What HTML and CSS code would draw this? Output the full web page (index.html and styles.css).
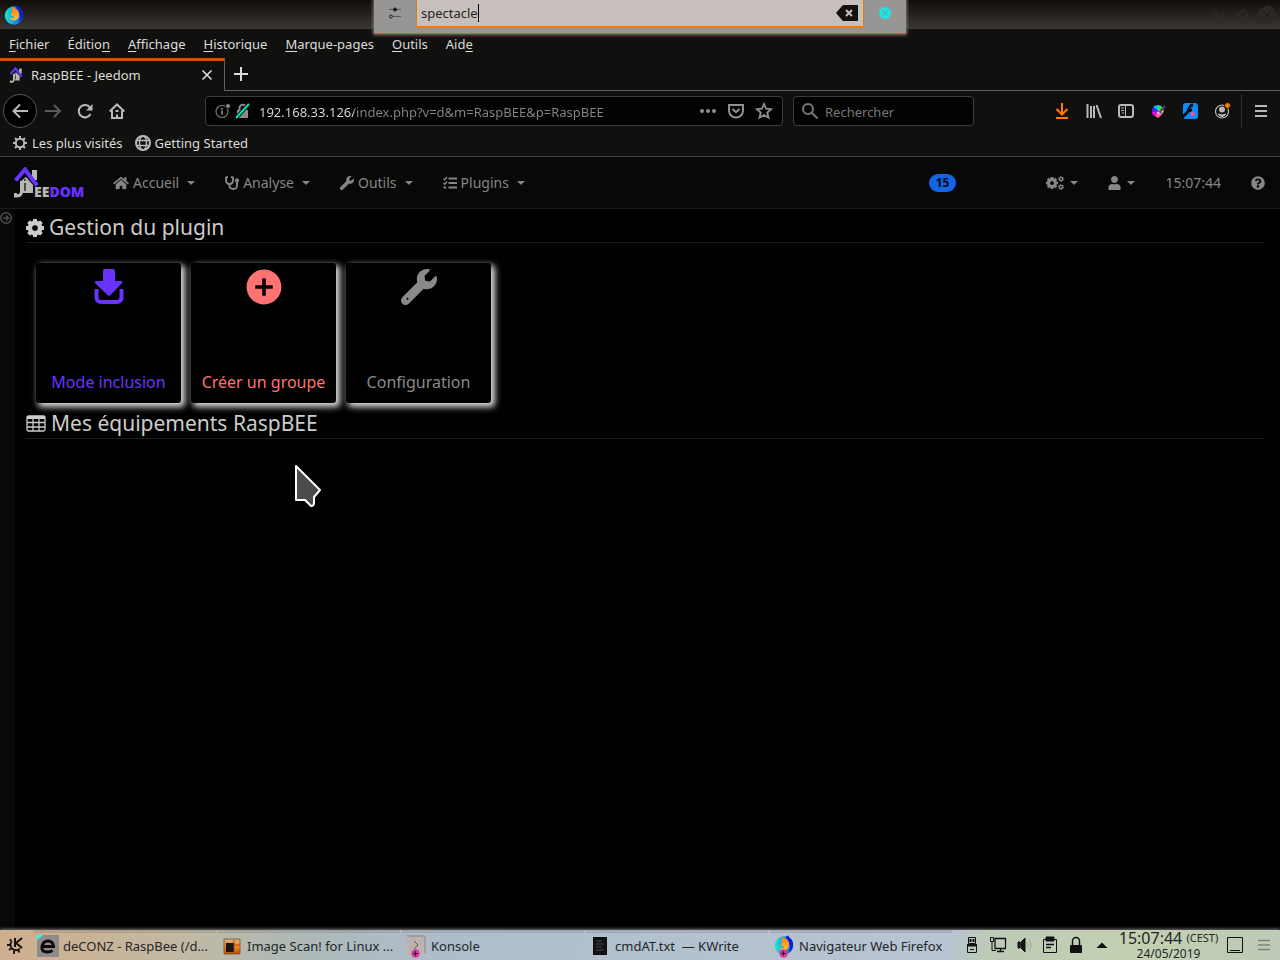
FILE: index.html
```html
<!DOCTYPE html>
<html lang="fr">
<head>
<meta charset="utf-8">
<title>RaspBEE - Jeedom</title>
<link rel="stylesheet" href="styles.css">
</head>
<body>
<svg class="defs" aria-hidden="true">
  <defs>
    <linearGradient id="ff-globe" x1="0" y1="0" x2="1" y2="0"><stop offset="0" stop-color="#19f0b4"/><stop offset=".35" stop-color="#12b4f5"/><stop offset="1" stop-color="#0a4bec"/></linearGradient>
    <linearGradient id="ff-fox" x1="0" y1="0" x2="0" y2="1"><stop offset="0" stop-color="#ff7a12"/><stop offset="1" stop-color="#ffc21f"/></linearGradient>
    <linearGradient id="orange-box" x1="0" y1="0" x2="0" y2="1"><stop offset="0" stop-color="#d9b18a"/><stop offset=".5" stop-color="#ef8a1f"/><stop offset="1" stop-color="#b8500a"/></linearGradient>
  </defs>
  <symbol id="firefox" viewBox="0 0 20 20"><circle cx="10" cy="10.500" r="9.200" fill="url(#ff-globe)"/><path d="M12 1.500l2-1 1.500 2C18.500 4.500 19.500 8 19 11c-.5 2.500-2 5-4 6 1.500-3 1.500-6 0-8.500C14 6 12.500 5 12 1.500z" fill="#0a1fd8"/><path d="M7.500 5L8 1.500l2 1.500c2 .5 3 1 4 2.500 1.500 2 1.500 5 .5 7-1 2-2.500 3-4.500 3s-3.500-1-4.500-3l3.500.8 1.500-1.500-2.500-.6L6.500 9l2-1.500z" fill="url(#ff-fox)"/></symbol>
  <symbol id="gear" viewBox="1 1 16 16"><path d="M9 1v16M1 9h16M3.300 3.300l11.400 11.400M14.700 3.300L3.300 14.700" stroke="currentColor" stroke-width="3.600"/><circle cx="9" cy="9" r="4.600" fill="none" stroke="currentColor" stroke-width="4"/><circle cx="9" cy="9" r="2.500" class="gear-hole"/></symbol>
  <symbol id="wrench" viewBox="0 0 512 512"><path fill="currentColor" d="M507.730 109.100c-2.240-9.030-13.540-12.090-20.120-5.510l-74.360 74.360-67.880-11.310-11.310-67.880 74.360-74.360c6.620-6.620 3.430-17.900-5.660-20.160-47.380-11.740-99.550.91-136.580 37.930-39.640 39.640-50.550 97.100-34.050 147.200L18.740 402.760c-24.990 24.990-24.990 65.510 0 90.500 24.990 24.990 65.510 24.990 90.500 0l213.210-213.210c50.120 16.710 107.470 5.680 147.370-34.220 37.070-37.070 49.700-89.320 37.910-136.730zM92 436c-8 0-14-6-14-14s6-14 14-14 14 6 14 14-6 14-14 14z"/></symbol>
  <symbol id="house-mark" viewBox="0 0 34 31"><path d="M18 3h5v10h-5z" fill="#b9b9b4"/><path d="M7 14l5-4 7 8v8H9z" fill="#b9b9b4"/><path d="M7.500 14v11q0 4-6 4v-3" fill="none" stroke="#b9b9b4" stroke-width="3"/><path d="M1.500 13.500L11 2.500l12 16" fill="none" stroke="#6833ff" stroke-width="4"/><path d="M11 16v8M11 12v2" stroke="#070707" stroke-width="1.200"/></symbol>
  <symbol id="plus-badge" viewBox="0 0 10 10"><circle cx="5" cy="5" r="4.700" fill="#e0359b"/><path d="M5 2.500v5M2.500 5h5" stroke="#111" stroke-width="1.200"/></symbol>
</svg>

<header class="browser">
  <div class="titlebar">
    <svg class="i20" aria-hidden="true"><use href="#firefox"/></svg>
    <svg class="window-controls" viewBox="0 0 66 20" fill="none" stroke="#35322f" aria-hidden="true"><path d="M4 8l5 5 5-5M28 10l5-5 5 5-5 5z"/><circle cx="57" cy="10" r="9" fill="#2b2826" stroke="none"/><path d="M53 6l8 8M61 6l-8 8" stroke="#1c1a18"/></svg>
  </div>
  <nav class="menubar" aria-label="Menu">
    <a href="#"><u>F</u>ichier</a><a href="#">Éditio<u>n</u></a><a href="#"><u>A</u>ffichage</a><a href="#"><u>H</u>istorique</a><a href="#"><u>M</u>arque-pages</a><a href="#"><u>O</u>utils</a><a href="#">Aid<u>e</u></a>
  </nav>
  <div class="tabs">
    <div class="tab">
      <svg class="tab-icon" aria-hidden="true" viewBox="0 0 24 31"><use href="#house-mark" width="34" height="31"/></svg>
      <span class="tab-title">RaspBEE - Jeedom</span>
      <button type="button" aria-label="Fermer l’onglet"><svg width="10" height="10" viewBox="0 0 10 10" stroke="currentColor" stroke-width="1.600"><path d="M.5.5l9 9M9.500.5l-9 9"/></svg></button>
    </div>
    <div class="tabs-rest">
      <button type="button" aria-label="Nouvel onglet"><svg width="14" height="14" viewBox="0 0 14 14" stroke="currentColor" stroke-width="2"><path d="M7 0v14M0 7h14"/></svg></button>
    </div>
  </div>
  <div class="toolbar">
    <button type="button" class="back" aria-label="Précédent"><svg class="i16" viewBox="0 0 16 16"><path d="M16 8H1.500M8 1.500L1.500 8 8 14.500"/></svg></button>
    <button type="button" class="tool dim" aria-label="Suivant"><svg class="i16" viewBox="0 0 16 16"><path d="M0 8h14.500M9 2l6 6-6 6"/></svg></button>
    <button type="button" class="tool" aria-label="Actualiser"><svg class="i16" viewBox="0 0 16 16"><path d="M13.500 11A6.200 6.200 0 1 1 13 4.500"/><path d="M15.500 1v6.500H9z" fill="currentColor" stroke="none"/></svg></button>
    <button type="button" class="tool" aria-label="Accueil"><svg class="i16" viewBox="0 0 16 16"><path d="M.7 8.500L8 1.500l7.300 7M3 7.500V15h10V7.500M8 15v-3.500M6.500 8h3"/></svg></button>
    <span class="spring"></span>
    <div class="urlbar">
      <svg class="i16 dim2" viewBox="0 0 16 16"><circle cx="7" cy="8.500" r="6" stroke-width="1.200"/><path d="M7 7.500v4M7 5v1.500"/><circle cx="13" cy="3" r="2.500" fill="#8b8b8b" stroke="#050505" stroke-width="1"/></svg>
      <svg class="i16" viewBox="0 0 16 16"><path d="M2 7h11v8H2z" fill="#8b8b8b" stroke="none"/><path d="M4.500 7V5a3.200 3.200 0 0 1 6.500 0v2" stroke="#8b8b8b"/><path d="M1 15L14 1" stroke="#050505" stroke-width="4"/><path d="M1 15L14 1" stroke="#00e6b0" stroke-width="2"/></svg>
      <input class="url" type="text" aria-label="Adresse" value="192.168.33.126/index.php?v=d&amp;m=RaspBEE&amp;p=RaspBEE">
      <button type="button" aria-label="Actions"><svg class="i16" viewBox="0 0 16 16"><g fill="currentColor" stroke="none"><circle cx="2" cy="8" r="2"/><circle cx="8" cy="8" r="2"/><circle cx="14" cy="8" r="2"/></g></svg></button>
      <button type="button" aria-label="Pocket"><svg class="i16" viewBox="0 0 16 16"><path d="M1 2h14v5.500a7 7 0 0 1-14 0zM4.500 6L8 9.200 11.500 6"/></svg></button>
      <button type="button" aria-label="Marquer cette page"><svg class="i16" viewBox="0 0 16 16"><path d="M8 1l2.100 4.700 5 .5-3.800 3.400 1.200 5.100L8 12l-4.500 2.700 1.200-5.100L.9 6.200l5-.5z" stroke-width="1.800"/></svg></button>
    </div>
    <div class="searchbox">
      <svg class="i16 dim2" viewBox="0 0 16 16"><circle cx="6" cy="6" r="5"/><path d="M9.500 9.500L15.500 15.500"/></svg>
      <input type="search" aria-label="Rechercher" placeholder="Rechercher">
    </div>
    <span class="spring"></span>
    <button type="button" class="tool orange" aria-label="Téléchargements"><svg class="i16" viewBox="0 0 16 16"><path d="M8 0v11M2.500 6L8 11.500 13.500 6M2 15h12"/></svg></button>
    <button type="button" class="tool" aria-label="Bibliothèque"><svg class="i16" viewBox="0 0 16 16"><path d="M1.500 1v14M5 3v12M8 3v12M10.500 2l4.500 13"/></svg></button>
    <button type="button" class="tool" aria-label="Panneaux latéraux"><svg class="i16" viewBox="0 0 16 16"><rect x="1" y="2" width="14" height="12" rx="2"/><path d="M7.500 2v12M3 5h3M3 7.500h3M4 10h2" stroke-width="1"/></svg></button>
    <button type="button" class="tool" aria-label="Couleurs"><svg class="i16" viewBox="0 0 16 16"><g stroke="none"><path d="M8 8L3 4Q5 2 8 2z" fill="#2af"/><path d="M8 8V2q3 0 5 3z" fill="#1ee66c"/><path d="M8 8L2 9q-.5-3 1-5z" fill="#3b25ff"/><path d="M8 8l-3 5q-3-1-3-4z" fill="#f0e"/><path d="M8 8l5-3q1 3 0 5z" fill="#ffe45c"/><path d="M8 8l5 2q-2 3-5 5l-3-2z" fill="#f45cb0"/></g><path d="M15 3L9 10" stroke="#51436a" stroke-width="2"/><path d="M8 9l1 2" stroke="#ddd"/></svg></button>
    <button type="button" class="tool" aria-label="Lecteur Flash"><svg class="i16" viewBox="0 0 16 16"><rect x="1" y="0" width="15" height="16" rx="3" fill="#078cff" stroke="none"/><path d="M11 2Q8 2 7 6T0 14M5 7.500h5" stroke="#050a18" stroke-width="3"/><path d="M9 8l5 3-5 3z" fill="#ff4f8e" stroke="none"/></svg></button>
    <button type="button" class="tool" aria-label="Compte"><svg class="i16" viewBox="0 0 16 16"><circle cx="8" cy="8.500" r="6.500" stroke-width="1.200"/><circle cx="8" cy="6.500" r="3" fill="currentColor" stroke="none"/><path d="M4 11q4 2 8 0-4 5-8 0z" fill="currentColor" stroke-width="1"/><circle cx="13.500" cy="2.500" r="3" fill="#ff7b00" stroke="#10100e" stroke-width="1"/></svg></button>
    <span class="divider"></span>
    <button type="button" class="tool" aria-label="Ouvrir le menu"><svg class="i16" viewBox="0 0 16 16"><path d="M2 3h12M2 8h12M2 13h12"/></svg></button>
  </div>
  <nav class="bookmarks" aria-label="Marque-pages">
    <a href="#"><svg class="i16" viewBox="0 0 16 16"><circle cx="8" cy="8" r="4.200"/><path d="M8 1v3M8 12v3M1 8h3M12 8h3M3 3l2 2M11 11l2 2M13 3l-2 2M5 11l-2 2"/></svg>Les plus visités</a>
    <a href="#"><svg class="i16" viewBox="0 0 16 16"><circle cx="8" cy="8" r="7"/><path d="M1.500 5.500h13M1.500 10.500h13" stroke-width="1.400"/><ellipse cx="8" cy="8" rx="3.500" ry="7" stroke-width="1.400"/></svg>Getting Started</a>
  </nav>
</header>

<nav class="navbar" aria-label="Jeedom">
  <a class="logo" href="#" aria-label="Jeedom"><svg width="71" height="32" viewBox="0 0 71 32"><use href="#house-mark" width="34" height="31"/><text x="20" y="30" class="logo-text"><tspan fill="#b9b9b4">EE</tspan><tspan fill="#6833ff">DOM</tspan></text></svg></a>
  <a class="nav-link" href="#"><svg width="16" height="14" viewBox="0 0 576 512"><path fill="currentColor" d="M280.370 148.260L96 300.110V464a16 16 0 0 0 16 16l112.060-.29a16 16 0 0 0 15.920-16V368a16 16 0 0 1 16-16h64a16 16 0 0 1 16 16v95.640a16 16 0 0 0 16 16.050L464 480a16 16 0 0 0 16-16V300L295.670 148.260a12.190 12.190 0 0 0-15.300 0zM571.600 251.470L488 182.560V44.050a12 12 0 0 0-12-12h-56a12 12 0 0 0-12 12v72.610L318.470 43a48 48 0 0 0-61 0L4.340 251.470a12 12 0 0 0-1.600 16.900l25.500 31A12 12 0 0 0 45.150 301l235.220-193.740a12.190 12.190 0 0 1 15.300 0L530.900 301a12 12 0 0 0 16.900-1.600l25.500-31a12 12 0 0 0-1.700-16.930z"/></svg>Accueil<span class="caret"></span></a>
  <a class="nav-link" href="#"><svg width="14" height="14" viewBox="0 0 14 14" fill="none" stroke="currentColor" stroke-width="1.900"><path d="M3 1L1 1.500V4q0 4 3.500 4T8 4V1.500L6 1M4.500 8v1.500q0 3.500 3.700 3.500T12 9.500V6"/><circle cx="12" cy="4.500" r="1.200"/></svg>Analyse<span class="caret"></span></a>
  <a class="nav-link" href="#"><svg width="14" height="14"><use href="#wrench"/></svg>Outils<span class="caret"></span></a>
  <a class="nav-link" href="#"><svg width="14" height="14" viewBox="0 0 14 14" fill="none" stroke="currentColor"><path d="M5.500 2.500H14M5.500 7H14M5.500 11.500H14" stroke-width="2"/><path d="M.5 2.500l1.200 1.200L4 1M.5 7l1.200 1.200L4 5.500" stroke-width="1.400"/><circle cx="1.800" cy="11.500" r="1.300" fill="currentColor" stroke="none"/></svg>Plugins<span class="caret"></span></a>
  <a class="badge" href="#">15</a>
  <a class="nav-link icon-link" href="#" aria-label="Réglages"><svg width="18" height="14" viewBox="0 0 18 14" fill="none" stroke="currentColor"><use href="#gear" x="0" y="1" width="12" height="12" stroke="none"/><circle cx="15" cy="3" r="1.600" stroke-width="1.400"/><circle cx="15" cy="11" r="1.600" stroke-width="1.400"/><circle cx="15" cy="3" r="2.600" stroke-dasharray="1.360"/><circle cx="15" cy="11" r="2.600" stroke-dasharray="1.360"/></svg><span class="caret"></span></a>
  <a class="nav-link icon-link" href="#" aria-label="Utilisateur"><svg width="13" height="14" viewBox="0 0 448 512"><path fill="currentColor" d="M224 256c70.700 0 128-57.300 128-128S294.700 0 224 0 96 57.300 96 128s57.300 128 128 128zm89.600 32h-16.700c-22.200 10.200-46.900 16-72.900 16s-50.600-5.800-72.900-16h-16.700C60.200 288 0 348.200 0 422.400V464c0 26.500 21.500 48 48 48h352c26.500 0 48-21.500 48-48v-41.600c0-74.200-60.200-134.400-134.400-134.400z"/></svg><span class="caret"></span></a>
  <time class="nav-link">15:07:44</time>
  <a class="nav-link" href="#" aria-label="Aide"><svg width="14" height="14" viewBox="0 0 512 512"><path fill="currentColor" d="M504 256c0 136.997-111.043 248-248 248S8 392.997 8 256C8 119.083 119.043 8 256 8s248 111.083 248 248zM262.655 90c-54.497 0-89.255 22.957-116.549 63.758-3.536 5.286-2.353 12.415 2.715 16.258l34.699 26.310c5.205 3.947 12.621 3.008 16.665-2.122 17.864-22.658 30.113-35.797 57.303-35.797 20.429 0 45.698 13.148 45.698 32.958 0 14.976-12.363 22.667-32.534 33.976C247.128 238.528 216 254.941 216 296v4c0 6.627 5.373 12 12 12h56c6.627 0 12-5.373 12-12v-1.333c0-28.462 83.186-29.647 83.186-106.667 0-58.002-60.165-102-116.531-102zM256 338c-25.365 0-46 20.635-46 46 0 25.364 20.635 46 46 46s46-20.636 46-46c0-25.365-20.635-46-46-46z"/></svg></a>
</nav>

<div class="page">
  <aside class="side"><button type="button" aria-label="Afficher le panneau"><svg width="12" height="12" viewBox="0 0 12 12" fill="none" stroke="#4c4c4c" stroke-width="1.500"><circle cx="6" cy="6" r="5.200"/><path d="M3 6h5M6 3.500L8.500 6 6 8.500"/></svg></button></aside>
  <main>
    <h1><svg width="18" height="18"><use href="#gear"/></svg>Gestion du plugin</h1>
    <div class="cards">
      <button type="button" class="card violet"><svg width="30" height="36" viewBox="0 0 30 36"><path d="M9 2q0-2 2-2h8q2 0 2 2v10h6q2.500.3.700 2.500L16.500 26q-1.500 1.500-3 0L1.500 14.500Q0 12 2.500 12H9z" fill="currentColor"/><path d="M2.500 20v8q0 5 5 5h15q5 0 5-5v-8" fill="none" stroke="currentColor" stroke-width="4" stroke-linejoin="round"/></svg><span>Mode inclusion</span></button>
      <button type="button" class="card coral"><svg width="36" height="36" viewBox="0 0 512 512"><path fill="currentColor" fill-rule="evenodd" d="M256 8C119 8 8 119 8 256s111 248 248 248 248-111 248-248S393 8 256 8zM282 282v92q0 6-6 6h-40q-6 0-6-6v-92h-92q-6 0-6-6v-40q0-6 6-6h92v-92q0-6 6-6h40q6 0 6 6v92h92q6 0 6 6v40q0 6-6 6z"/></svg><span>Créer un groupe</span></button>
      <button type="button" class="card grey"><svg width="36" height="36"><use href="#wrench"/></svg><span>Configuration</span></button>
    </div>
    <h1><svg width="20" height="18" viewBox="0 0 20 18" fill="none" stroke="currentColor" stroke-width="1.300"><rect x="1" y="1" width="18" height="15" rx="1.500"/><path d="M1 2.500h18" stroke-width="3"/><path d="M7 3v13M13 3v13M1 7.500h18M1 12h18"/></svg>Mes équipements RaspBEE</h1>
  </main>
</div>

<footer class="taskbar">
  <button type="button" class="launcher" aria-label="Menu K"><svg width="18" height="18" viewBox="0 0 18 18" fill="none" stroke="#15120f" stroke-width="2"><path d="M9 2v9M16 2l-6 5 6 5"/><path d="M6 5a5 5 0 1 0 8 7.500" stroke-width="1.800"/><path d="M4.500 3v2M1 9h3M3 14l2-1.500M8 15v3M12 14l1.500 2.500" stroke-width="1.800"/></svg></button>
  <div class="tasks">
    <button type="button" class="task"><svg class="i22" viewBox="0 0 22 22"><path d="M0 0h22v22H0z" fill="#8e8b89"/><path d="M0 0h6L0 5z" fill="#2fe"/><path d="M5 11.500h11.500Q16 6 11 6t-6 5.500 5.500 5.500q3 0 5-1.500" fill="none" stroke="#0c0c0c" stroke-width="3"/></svg><span>deCONZ - RaspBee (/d...</span></button>
    <button type="button" class="task"><svg class="i22" viewBox="0 0 22 22"><path d="M3 4h16v15H3z" fill="url(#orange-box)" stroke="#6c4020" stroke-width=".7"/><path d="M5 8h8v9H5z" fill="#151515"/><path d="M13 5v13M13 10h6" stroke="#a34a12"/></svg><span>Image Scan! for Linux ...</span></button>
    <button type="button" class="task"><svg class="i22" viewBox="0 0 22 22"><path d="M2 1h18v18H2z" fill="#bdb2b0"/><path d="M2 1h18M20 2v16" stroke="#8d8583"/><path d="M9 6l4 4-4 4" fill="none" stroke="#555"/><use href="#plus-badge" x="6" y="14" width="9" height="9"/></svg><span>Konsole</span></button>
    <button type="button" class="task"><svg class="i22" viewBox="0 0 22 22"><path d="M4 2h14v18H4z" fill="#111"/><path d="M7 6h6M7 9h8M7 12h6M7 15h8" stroke="#484848"/></svg><span>cmdAT.txt&nbsp; — KWrite</span></button>
    <button type="button" class="task"><svg class="i22" viewBox="0 0 22 22"><use href="#firefox" x="1" y="0" width="20" height="20"/><use href="#plus-badge" x="6" y="14" width="9" height="9"/></svg><span>Navigateur Web Firefox</span></button>
  </div>
  <div class="tray">
    <svg viewBox="0 0 16 18"><path d="M4.500 1.500h7v6h-7zM3.500 8.500h9v8h-9z"/><path d="M3 9.500h10M6.500 3v3M9.500 3v3" stroke-width="2"/><path d="M6 13.500h4"/></svg>
    <svg viewBox="0 0 16 18"><path d="M5 2.500h10.500v10H5zM7 15.500h7M10.500 13v3" stroke-width="1.300"/><path d="M.5 1.500h3v4h-3zM2 5.500v9h4"/></svg>
    <svg viewBox="0 0 16 18"><path d="M2 6h2v6H2z" fill="#111"/><path d="M5 6l4-4v14l-4-4z" fill="#111"/><path d="M11 6q2 3 0 6M13 3q4 6 0 12" stroke="#9da996"/></svg>
    <svg viewBox="0 0 16 18"><path d="M1.500 3.500h13v13h-13z"/><path d="M4 8.500h8M4 11.500h5" stroke-width="1.400"/><path d="M4 1h8v4H4z" fill="#111"/></svg>
    <svg viewBox="0 0 16 18"><path d="M2.500 9.500h11v7h-11z" fill="#111"/><path d="M4.500 9V5a3.500 3.500 0 0 1 7 0v4" stroke-width="1.500"/></svg>
    <svg viewBox="0 0 16 18"><path d="M2.500 12L8 6.500l5.500 5.500z" fill="#111" stroke="none"/></svg>
  </div>
  <div class="clock"><div><time>15:07:44</time> <small>(CEST)</small></div><div class="date">24/05/2019</div></div>
  <div class="tray tray-end">
    <svg viewBox="0 0 16 18"><path d="M.5 1.500h15v15H.5zM3 14.500h10"/></svg>
    <svg viewBox="0 0 16 18"><path d="M2 4.500h12M2 9h12M2 13.500h12" stroke="#7c8678" stroke-width="1.600"/></svg>
  </div>
</footer>

<div class="krunner">
  <button type="button" aria-label="Configurer"><svg width="12" height="12" viewBox="0 0 12 12" fill="none" stroke="#5d5a57"><path d="M0 2.500h12M4 9.500h8"/><circle cx="6" cy="2.500" r="1.500" fill="#111" stroke="#111"/><circle cx="2" cy="9.500" r="1.500" stroke="#222"/></svg></button>
  <div class="krunner-field">
    <input type="text" aria-label="Rechercher" value="spectacle"><span class="text-cursor"></span>
    <button type="button" aria-label="Effacer"><svg width="22" height="16" viewBox="0 0 22 16"><path d="M0 8l6-7q.8-1 2-1h14v16H8q-1.200 0-2-1z" fill="#111"/><path d="M10 5l6 6M16 5l-6 6" stroke="#c6bfbb" stroke-width="2"/></svg></button>
  </div>
  <button type="button" aria-label="Fermer"><svg width="12" height="12" viewBox="0 0 12 12"><circle cx="6" cy="6" r="6" fill="#22e0e0"/><path d="M3.500 3.500l5 5M8.500 3.500l-5 5" stroke="#5fa9a8"/></svg></button>
</div>

<svg class="pointer" viewBox="0 0 28 44" aria-hidden="true"><path d="M2 2v34h9l6 6q3 0 3-3v-6l6-7z" fill="#4b4b4b" stroke="#fff" stroke-width="2" stroke-linejoin="round"/></svg>
</body>
</html>
```
FILE: styles.css
```css
* { box-sizing: border-box; }
body {
  margin: 0;
  min-height: 100vh;
  display: flex;
  flex-direction: column;
  position: relative;
  background: #000;
  color: #dcdcda;
  font: 13px/18px "Noto Sans", "Open Sans", sans-serif;
}
a { color: inherit; text-decoration: none; }
button { font: inherit; color: inherit; background: none; border: 0; padding: 0; display: flex; align-items: center; justify-content: center; }
input { font: inherit; color: inherit; background: none; border: 0; padding: 0; outline: 0; min-width: 0; }
svg { display: block; flex: none; overflow: visible; }
.defs { position: absolute; width: 0; height: 0; }
.i16 { width: 16px; height: 16px; fill: none; stroke: currentColor; stroke-width: 2; }
.i20 { width: 20px; height: 20px; }
.i22 { width: 22px; height: 22px; }
.gear-hole { fill: #000; }

.browser { background: #10100e; border-bottom: 1px solid #444442; }
.titlebar {
  height: 29px;
  padding: 0 4px;
  display: flex;
  align-items: center;
  justify-content: space-between;
  background: linear-gradient(#100d0b, #3a3633);
}
.window-controls { width: 66px; height: 20px; }
.menubar { display: flex; gap: 18px; padding: 6px 9px 5px; }
.menubar u { text-underline-offset: 2px; }

.tabs { display: flex; height: 33px; }
.tab {
  width: 225px;
  padding: 0 12px 2px 9px;
  display: flex;
  align-items: center;
  gap: 8px;
  border-top: 3px solid #c4511b;
  border-right: 1px solid #60605e;
}
.tab-icon { width: 14px; height: 16px; }
.tab-title { flex: 1; }
.tabs-rest { flex: 1; display: flex; padding: 0 0 2px 9px; border-top: 1px solid #10100e; border-bottom: 1px solid #60605e; }

.toolbar { display: flex; align-items: center; padding: 3px 3px; color: #b9b9b7; }
.back { width: 34px; height: 34px; border: 1px solid #555553; border-radius: 50%; background: #000; }
.tool { width: 32px; height: 32px; }
.dim { color: #5c5c5a; }
.dim2 { color: #777775; }
.orange { color: #ff7b00; }
.spring { flex: 0 1 72px; }
.urlbar, .searchbox {
  display: flex;
  align-items: center;
  height: 30px;
  background: #030303;
  border: 1px solid #3d3d3a;
  border-radius: 4px;
}
.urlbar { flex: 1; min-width: 0; padding: 0 6px 0 9px; gap: 4px; color: #909090; }
.urlbar button { width: 24px; }
.url {
  flex: 1;
  margin-left: 4px;
  padding-top: 2px;
  background: linear-gradient(90deg, #dcdcda 95px, #858583 95px);
  background-clip: text;
  -webkit-text-fill-color: transparent;
}
.searchbox { flex: 0 1 181px; min-width: 0; margin-left: 10px; padding: 0 8px; gap: 7px; }
.searchbox input { flex: 1; width: 0; padding-top: 2px; }
.searchbox input::placeholder { color: #777775; opacity: 1; }
.divider { width: 1px; height: 34px; margin: 0 3px; background: #30302e; }

.bookmarks { display: flex; gap: 12px; padding: 3px 12px 4px; }
.bookmarks a { display: flex; align-items: center; gap: 4px; }
.bookmarks svg { color: #b9b9b7; }

.navbar {
  display: flex;
  align-items: center;
  height: 52px;
  padding-left: 14px;
  background: #080808;
  border-bottom: 1px solid #191919;
  color: #868684;
  font-size: 14px;
}
.logo { margin-right: 13px; }
.logo-text { font: 900 14px "Noto Sans", sans-serif; }
.nav-link { display: flex; align-items: center; gap: 4px; padding: 0 15px; }
.icon-link { gap: 2px; }
.caret { border: 4px solid transparent; border-top-color: currentColor; border-bottom: 0; margin-left: 4px; }
.badge {
  margin-left: auto;
  margin-right: 75px;
  padding: 0 7px;
  background: #1464e6;
  color: #05080d;
  border-radius: 9px;
  font-size: 12px;
  font-weight: 700;
}

.page { flex: 1; display: flex; }
.side { width: 15px; padding-top: 3px; background: #080808; }
main { flex: 1; padding: 4px 15px 0 11px; }
h1 {
  display: flex;
  align-items: center;
  gap: 5px;
  margin: 0;
  border-bottom: 1px solid #1b1b1b;
  color: #ccccca;
  font-size: 21px;
  font-weight: 400;
  line-height: 29px;
}
.cards { display: flex; flex-wrap: wrap; gap: 10px; padding: 20px 10px 6px; }
.card {
  width: 145px;
  height: 140px;
  padding: 6px 0 11px;
  flex-direction: column;
  justify-content: space-between;
  border-radius: 3px;
  background: #000;
  box-shadow: 3px 3px 6px 1px #ddd;
  font-size: 16px;
  line-height: 20px;
}
.violet { color: #6833ff; }
.coral { color: #ff7272; }
.grey { color: #8a8a8a; }

.taskbar {
  display: flex;
  height: 30px;
  background: linear-gradient(100deg, #cfae8e 0, #c2b9a2 14%, #adb9b8 24%, #afbdca 34%, #b8c4d1 74%, #bccab8 77%, #c3d0b0 88%, #bccab8 100%);
  box-shadow: 0 -1px 3px #777;
  color: #232629;
}
.launcher { width: 34px; padding-right: 4px; }
.tasks { flex: 0 1 918px; display: flex; gap: 2px; min-width: 0; }
.task { flex: 1 1 0; min-width: 0; justify-content: flex-start; gap: 4px; padding: 0 3px 2px; border-top: 3px solid #00000018; white-space: nowrap; }
.tray { display: flex; align-items: center; margin-left: 7px; }
.tray svg { width: 26px; height: 18px; fill: none; stroke: #111; }
.clock { flex: 1; text-align: center; font-size: 16px; line-height: 17px; white-space: nowrap; }
.clock small { font-size: 11px; vertical-align: 2px; line-height: 1; }
.date { font-size: 12px; line-height: 13px; }
.tray-end { margin: 0 3px 0 0; gap: 3px; }

.krunner {
  position: absolute;
  top: 0;
  left: 50%;
  width: 532px;
  height: 34px;
  margin-left: -266px;
  display: flex;
  align-items: flex-start;
  background: #989694;
  border-bottom: 1px solid #bd6a40;
  box-shadow: 0 0 3px 1px #777;
}
.krunner > button { width: 42px; height: 26px; }
.krunner-field {
  flex: 1;
  display: flex;
  align-items: center;
  height: 27px;
  padding: 0 5px 0 4px;
  border: solid #e07a14;
  border-width: 0 1px 1px;
  border-radius: 0 0 2px 2px;
  background: #c6bfbb;
  color: #232629;
}
.krunner-field input { width: 57px; field-sizing: content; }
.krunner-field button { margin-left: auto; }
.text-cursor { width: 1px; height: 18px; background: #000; }

.pointer { position: absolute; left: 294px; top: 464px; width: 28px; height: 44px; }
```
